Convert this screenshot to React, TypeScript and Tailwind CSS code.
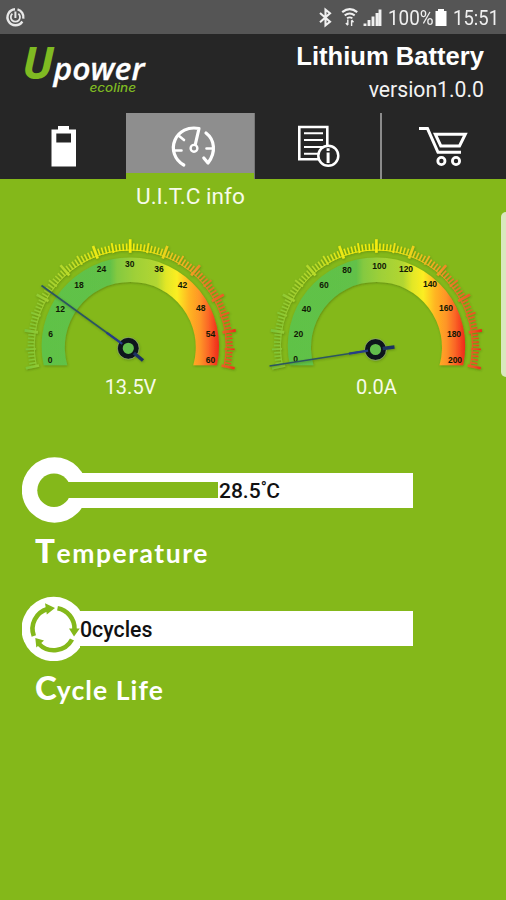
import React from "react";

type GaugeProps = {
  id: string;
  offset: number;
  labels: { text: string; x: number; y: number }[];
  hub: [number, number];
  tip: [number, number];
  tail: [number, number];
  name: string;
};

const CX = 130.3;
const CY = 346;

const bandStops: [number, string][] = [
  [41, "#5fc247"],
  [110, "#62c148"],
  [117, "#84c940"],
  [135, "#9fd038"],
  [157, "#b2d631"],
  [166, "#e2e727"],
  [177, "#fbee22"],
  [189, "#ffb522"],
  [200, "#fe9526"],
  [209, "#fa6425"],
  [219, "#ef281b"],
];

const tickStops: [number, string][] = [
  [25, "#79c43a"],
  [45, "#9fce30"],
  [70, "#bddc2a"],
  [95, "#ebe914"],
  [130, "#f7ee0c"],
  [160, "#eadb18"],
  [185, "#f2ae22"],
  [208, "#ec7428"],
  [228, "#ea5424"],
  [237, "#f01f18"],
];

function Stops({ list }: { list: [number, string][] }) {
  const first = list[0][0];
  const span = list[list.length - 1][0] - first;
  return (
    <>
      {list.map(([x, c]) => (
        <stop key={x} offset={(x - first) / span} stopColor={c} />
      ))}
    </>
  );
}

function polar(r: number, deg: number): [number, number] {
  const a = (deg * Math.PI) / 180;
  return [130.2 + r * Math.sin(a), CY - r * Math.cos(a)];
}

function Gauge({ id, offset, labels, hub, tip, tail, name }: GaugeProps) {
  const ticks = Array.from({ length: 101 }, (_, i) => i);
  const tickPath = (test: (i: number) => boolean, r1: number, r2: number) =>
    ticks
      .filter(test)
      .map((i) => {
        const deg = -102 + i * 2.04;
        const [x1, y1] = polar(r1, deg);
        const [x2, y2] = polar(r2, deg);
        return `M${x1.toFixed(2)} ${y1.toFixed(2)}L${x2.toFixed(2)} ${y2.toFixed(2)}`;
      })
      .join("");
  const [ax, ay] = polar(96, -102);
  const [bx, by] = polar(96, 102);
  return (
    <svg
      className="block h-[145px] w-[253px]"
      viewBox={`${offset ? 253 : 0} 230 253 145`}
      role="img"
      aria-label={name}
    >
      <defs>
        <linearGradient id={`${id}-band`} gradientUnits="userSpaceOnUse" x1="41" x2="219" y1="0" y2="0">
          <Stops list={bandStops} />
        </linearGradient>
        <linearGradient id={`${id}-tick`} gradientUnits="userSpaceOnUse" x1="25" x2="237" y1="0" y2="0">
          <Stops list={tickStops} />
        </linearGradient>
        <filter id={`${id}-shadow`} x="-20%" y="-20%" width="140%" height="140%">
          <feDropShadow dx="0.6" dy="1" stdDeviation="0.8" floodColor="#2f4a08" floodOpacity="0.4" />
        </filter>
      </defs>
      <g transform={`translate(${offset} 0)`}>
        <g filter={`url(#${id}-shadow)`}>
          <path
            d={`M${CX - 86.6} 365.3A88.7 88.7 0 1 1 ${CX + 86.6} 365.3L${CX + 63} 365.3A65.5 65.5 0 1 0 ${CX - 63} 365.3Z`}
            fill={`url(#${id}-band)`}
          />
        </g>
        <g stroke={`url(#${id}-tick)`} fill="none" filter={`url(#${id}-shadow)`}>
          <path d={`M${ax} ${ay}A96 96 0 1 1 ${bx} ${by}`} strokeWidth="0.9" />
          <path d={tickPath((i) => i % 5 !== 0, 95.5, 102.5)} strokeWidth="1.5" />
          <path d={tickPath((i) => i % 10 === 5, 94.5, 104.5)} strokeWidth="1.8" />
          <path d={tickPath((i) => i % 10 === 0, 93.3, 106.7)} strokeWidth="2.6" />
        </g>
      </g>
      <g fill="#101804" className="font-['Liberation_Sans'] text-[8.5px] font-bold" textAnchor="middle">
        {labels.map((l) => (
          <text key={l.text} x={l.x} y={l.y + 3}>
            {l.text}
          </text>
        ))}
      </g>
      <g filter={`url(#${id}-shadow)`}>
        <path d={`M${tip[0]} ${tip[1]}L${hub[0]} ${hub[1]}`} stroke="#2c5660" strokeWidth="1.7" />
        <circle cx={hub[0]} cy={hub[1]} r="8.1" fill="#62be4c" stroke="#10131f" strokeWidth="5" />
        <circle cx={hub[0]} cy={hub[1]} r="10.9" fill="none" stroke="#8fa68a" strokeWidth="0.7" opacity="0.8" />
        <path
          d={`M${hub[0] + (tail[0] - hub[0]) * 0.38} ${hub[1] + (tail[1] - hub[1]) * 0.38}L${tail[0]} ${tail[1]}`}
          stroke="#1d3260"
          strokeWidth="3.4"
        />
        <path
          d={`M${hub[0] + (tip[0] - hub[0]) * 0.25} ${hub[1] + (tip[1] - hub[1]) * 0.25}L${hub[0] + (tip[0] - hub[0]) * 0.07} ${hub[1] + (tip[1] - hub[1]) * 0.07}`}
          stroke="#263e86"
          strokeWidth="2.2"
        />
      </g>
    </svg>
  );
}

const voltLabels = [
  { text: "0", x: 50, y: 360 },
  { text: "6", x: 50.5, y: 334 },
  { text: "12", x: 60.3, y: 308.5 },
  { text: "18", x: 79, y: 285 },
  { text: "24", x: 101.5, y: 269 },
  { text: "30", x: 129.7, y: 264.3 },
  { text: "36", x: 159, y: 269.3 },
  { text: "42", x: 182.5, y: 285 },
  { text: "48", x: 200.7, y: 308.3 },
  { text: "54", x: 210.5, y: 334 },
  { text: "60", x: 210.5, y: 360 },
];

const ampLabels = [
  { text: "0", x: 295.6, y: 359 },
  { text: "20", x: 298.5, y: 334 },
  { text: "40", x: 306.5, y: 308.5 },
  { text: "60", x: 324, y: 285 },
  { text: "80", x: 347, y: 269.5 },
  { text: "100", x: 379.3, y: 265.5 },
  { text: "120", x: 406, y: 269 },
  { text: "140", x: 430, y: 283.5 },
  { text: "160", x: 446, y: 307.5 },
  { text: "180", x: 454, y: 333.5 },
  { text: "200", x: 455, y: 359.5 },
];

function StatusBar() {
  return (
    <div className="flex h-[34px] items-center bg-[#555555] text-[#f0f0f0]">
      <svg className="block h-[34px] w-[40px]" viewBox="0 0 40 34" fill="none" stroke="#e8e8e8">
        <path d="M15 9.3A8 8 0 1 0 22.3 21.5M17.5 9.4A8 8 0 0 1 23.3 18.6" strokeWidth="2.4" />
        <path d="M12.4 13.6A4.6 4.6 0 1 0 18.4 13.6" strokeWidth="1.8" />
        <path d="M15.4 11.5V18" strokeWidth="2" />
      </svg>
      <svg className="ml-[274px] block h-[34px] w-[70px] shrink-0" viewBox="314 0 70 34" fill="none" stroke="#f0f0f0">
        <path d="M320 13L330 21.7L325.5 25.3V9.7L330 13.3L320 22.2" strokeWidth="2.1" />
        <path d="M342.2 12.2Q349.7 6.2 357.2 12.2" strokeWidth="2.2" />
        <path d="M344.7 15.4Q349.7 11.6 354.7 15.4" strokeWidth="2" />
        <path d="M347 18.3Q349.7 16.4 352.4 18.3" strokeWidth="1.8" />
        <path d="M347.8 19.5V25M345.9 23L347.8 25.2M351.6 26V20.5M353.5 22.2L351.6 20" strokeWidth="1.4" />
        <path d="M365 26V23.5M369 26V20M373 26V16.5M377 26V13M380 26V9.5" strokeWidth="2.9" />
      </svg>
      <span className="ml-[4px] mt-px w-[43px] origin-left scale-x-[0.9] whitespace-nowrap font-['Roboto',sans-serif] text-[21px] leading-[34px]">
        100%
      </span>
      <svg className="ml-[4px] block h-[34px] w-[12px] shrink-0" viewBox="0 0 12 34">
        <path d="M3 9H9V11H11.5V26H0.5V11H3Z" fill="#fff" />
      </svg>
      <span className="ml-[6px] mt-px origin-left scale-x-[0.88] whitespace-nowrap font-['Roboto',sans-serif] text-[21px] leading-[34px]">
        15:51
      </span>
    </div>
  );
}

function Header() {
  return (
    <header className="flex h-[79px] justify-between bg-[#262626]">
      <svg className="block h-[79px] w-[170px] overflow-visible" viewBox="0 34 170 79">
        <text x="22" y="79" fill="#7fba22" textLength="32" lengthAdjust="spacingAndGlyphs" className="font-['Open_Sans'] text-[45px] font-bold italic">
          U
        </text>
        <text x="53.5" y="79.5" fill="#fff" textLength="91" lengthAdjust="spacingAndGlyphs" className="font-['Open_Sans'] text-[31.5px] font-semibold italic" stroke="#fff" strokeWidth="0.3">
          power
        </text>
        <text x="89.5" y="91.5" fill="#7fba22" textLength="46.5" lengthAdjust="spacingAndGlyphs" className="font-['Inter'] text-[12px] font-medium italic">
          ecoline
        </text>
      </svg>
      <div className="flex flex-col items-end pr-[22px] pt-[7px] text-white">
        <h1 className="font-['Liberation_Sans',sans-serif] text-[25.6px] font-bold leading-[30px]">Lithium Battery</h1>
        <p className="mt-[5px] font-['Roboto',sans-serif] text-[21.2px] leading-[28px] text-[#f2f2f2]">version1.0.0</p>
      </div>
    </header>
  );
}

function Tabs() {
  return (
    <nav className="flex h-[66px] bg-[#262626]">
      <div className="w-[126px]">
        <svg className="block h-[66px] w-[126px]" viewBox="0 113 126 66">
          <path d="M58 126H69V129.5H76V166.5H51.5V129.5H58Z" fill="#fff" />
          <path d="M56.3 133.5H71V142.5H56.3Z" fill="#262626" />
        </svg>
      </div>
      <div className="h-[66px] w-[128px] border-b-[6px] border-[#84b81a] bg-[#8e8e8e]">
        <svg className="block h-[60px] w-[128px]" viewBox="126 113 128 60" fill="none" stroke="#fff" strokeWidth="3.2" strokeLinecap="round" strokeLinejoin="round">
          <path d="M183.8 165C174.5 160 171 149 175 140C179 131 188 126.5 199 128.5L195.3 144.5" />
          <circle cx="194" cy="148.3" r="3.4" strokeWidth="2.4" />
          <path d="M206 133C214.5 139.5 216.5 152 208 163L203.8 158" />
          <path d="M173.5 150.5H181.5M206.5 148.5H213M178.5 135.5L184 140" strokeWidth="2.6" />
        </svg>
      </div>
      <div className="w-[126px] border-l border-[#777777]">
        <svg className="block h-[66px] w-[125px]" viewBox="255 113 125 66" fill="none" stroke="#fff">
          <path d="M299.3 127H327.3V159.3H299.3Z" strokeWidth="2.6" />
          <path d="M304 133.2H323M304 140H323M304 147H323M304 153.7H320" strokeWidth="2" />
          <circle cx="328.3" cy="155.8" r="10" fill="#262626" strokeWidth="2.5" />
          <path d="M328.1 152.5V163M328.1 148.3V151" strokeWidth="3" />
        </svg>
      </div>
      <div className="w-[126px] border-l-[2px] border-[#8b8b8b]">
        <svg className="block h-[66px] w-[124px]" viewBox="382 113 124 66" fill="none" stroke="#fff" strokeWidth="3">
          <path d="M419 128.6H427.5L438 152.3H461" />
          <path d="M435.3 134.2H465.3L459.5 146H440.8Z" />
          <circle cx="441.4" cy="161" r="3.6" strokeWidth="2.8" />
          <circle cx="456" cy="161" r="3.6" strokeWidth="2.8" />
        </svg>
      </div>
    </nav>
  );
}

export default function App() {
  return (
    <div className="relative flex h-[900px] w-[506px] flex-col overflow-hidden bg-[#84b81a]">
      <StatusBar />
      <Header />
      <Tabs />
      <main className="flex flex-1 flex-col">
        <p className="h-[51px] pl-[136px] pt-[4px] font-['Roboto',sans-serif] text-[22.6px] leading-[28px] text-[#f7fbe9]">
          U.I.T.C info
        </p>
        <section className="flex">
          <div className="w-[253px]">
            <Gauge id="volt" name="Voltage" offset={0} labels={voltLabels} hub={[128.3, 348.3]} tip={[41.5, 285.5]} tail={[143, 360.5]} />
            <p className="pl-[8px] text-center font-['Roboto',sans-serif] text-[20px] leading-[24px] text-[#f7fbe9]">13.5V</p>
          </div>
          <div className="w-[253px]">
            <Gauge id="amp" name="Current" offset={246.2} labels={ampLabels} hub={[375.5, 349.5]} tip={[269.5, 366]} tail={[394.5, 347]} />
            <p className="pr-[6px] text-center font-['Roboto',sans-serif] text-[20px] leading-[24px] text-[#f7fbe9]">0.0A</p>
          </div>
        </section>

        <section className="mt-[58px] pl-[22px]">
          <div className="flex items-start">
            <svg className="block h-[66px] w-[66px]" viewBox="0 0 66 66">
              <circle cx="32.5" cy="33" r="32.7" fill="#fff" />
              <path d="M56 16H66V51H56Z" fill="#fff" />
              <circle cx="32" cy="33.3" r="16.7" fill="#84b81a" />
              <path d="M46 25H66V41H46Z" fill="#84b81a" />
            </svg>
            <div className="mt-[16px] flex h-[35px] w-[325px] items-start bg-white">
              <div className="mt-[9px] h-[16px] w-[130px] bg-[#84b81a]" />
              <span className="flex pl-px font-['Roboto',sans-serif] text-[21px] font-medium leading-[36px] text-[#111111]">
                28.5<span className="text-[16px] leading-[30px] tracking-[-0.5px]">°</span>C
              </span>
            </div>
          </div>
          <h2 className="h-[72px] pl-[13px] pt-[5px] font-['Lato',sans-serif] text-[26.5px] font-bold leading-[44px] tracking-[1.55px] text-white">
            <span className="text-[33px] font-black">T</span>emperature
          </h2>
          <div className="flex items-start">
            <svg className="block h-[66px] w-[58px]" viewBox="0 0 58 66">
              <circle cx="31.7" cy="34" r="32.2" fill="#fff" />
              <g fill="none" stroke="#84b81a" strokeWidth="4.6">
                <path d="M11.8 41A20.7 20.7 0 0 1 25.5 14" />
                <path d="M35.5 13.3A20.7 20.7 0 0 1 52.5 34" />
                <path d="M50 44.5A20.7 20.7 0 0 1 17 49" />
              </g>
              <path d="M23 8.2L33 13L24.8 19.6Z M47 33.5L57.8 33.5L52 41.5Z M13.3 43L22 45.5L14.3 52.5Z" fill="#84b81a" />
            </svg>
            <div className="mt-[16px] h-[35px] w-[333px] bg-white font-['Roboto',sans-serif] text-[21.3px] font-medium leading-[38px] text-[#111111]">
              0cycles
            </div>
          </div>
          <h2 className="pl-[13px] pt-[4px] font-['Lato',sans-serif] text-[26.5px] font-bold leading-[44px] tracking-[1.1px] text-white">
            <span className="text-[33px] font-black tracking-[0px]">C</span>ycle Life
          </h2>
        </section>
      </main>
      <div className="absolute right-[-6px] top-[212px] h-[165px] w-[11.5px] rounded-[5px] bg-[#d9e8be]" />
    </div>
  );
}
